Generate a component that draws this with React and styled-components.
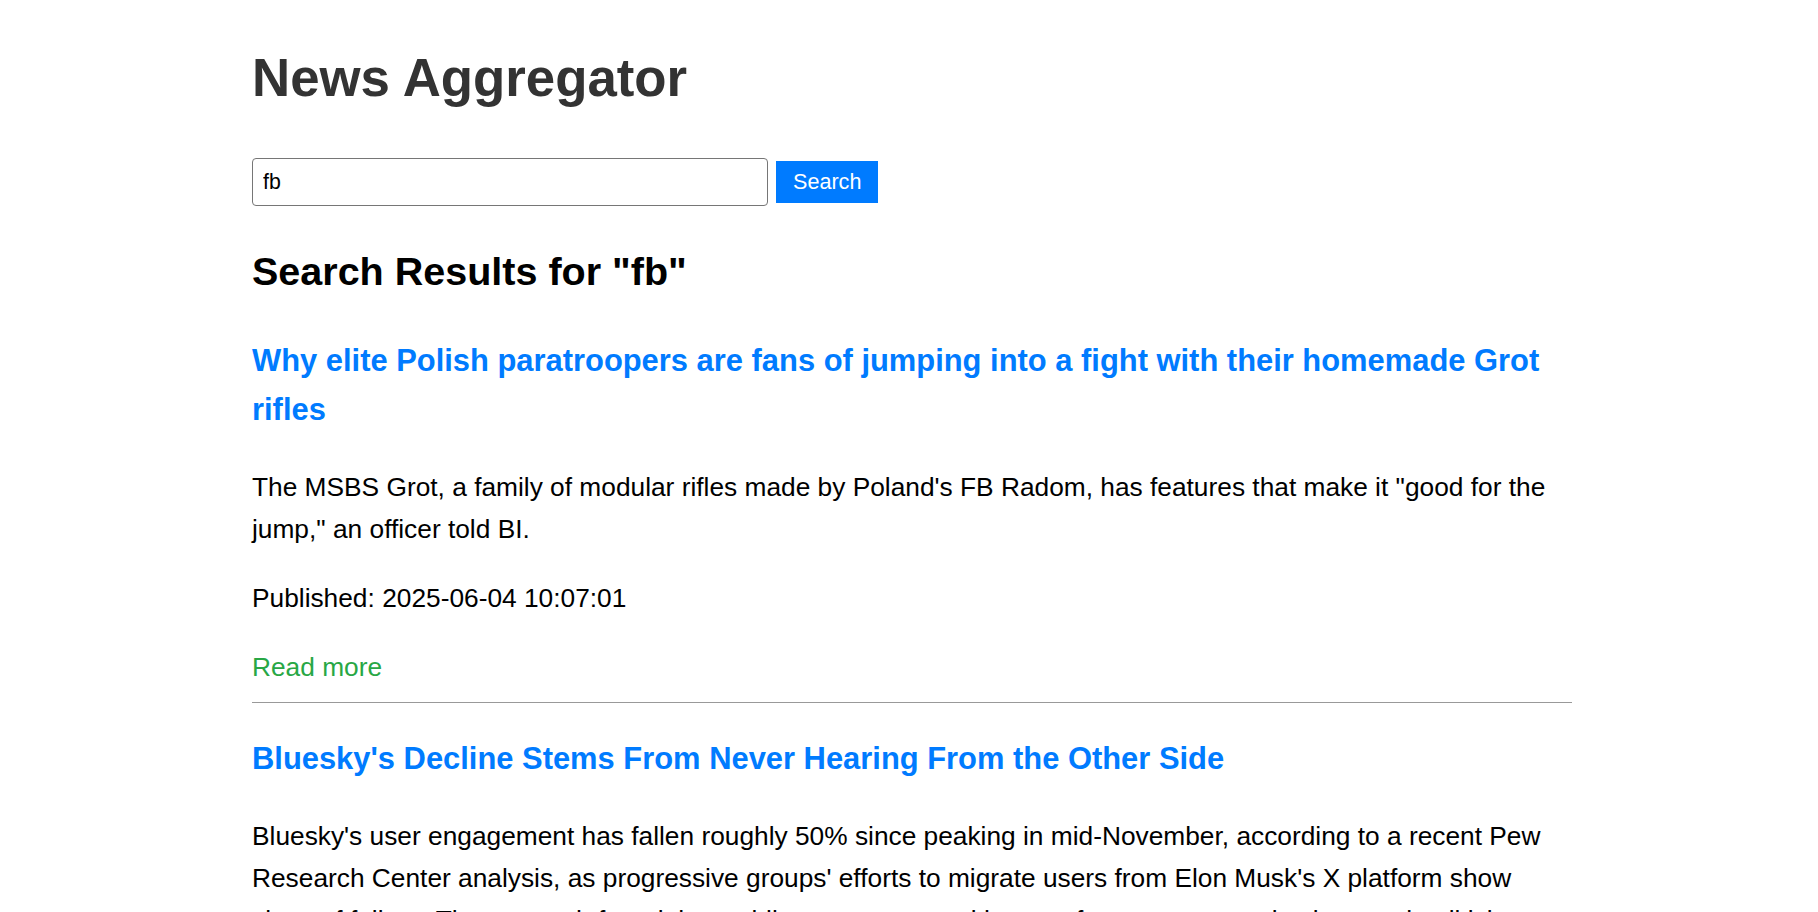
import React, { useState } from "react";
import styled, { createGlobalStyle } from "styled-components";

const GlobalStyle = createGlobalStyle`
  html, body {
    margin: 0;
    padding: 0;
    background: #fff;
  }
  body {
    font-family: "Liberation Sans", Arial, sans-serif;
    color: #000;
  }
`;

const Page = styled.div`
  display: flex;
  justify-content: center;
  padding: 48px 0 40px 6px;
`;

const Container = styled.main`
  width: 1320px;
  display: flex;
  flex-direction: column;
`;

const Heading = styled.h1`
  margin: 0;
  font-size: 52.8px;
  line-height: 60px;
  font-weight: 700;
  color: #333;
`;

const SearchForm = styled.form`
  display: flex;
  align-items: center;
  gap: 8px;
  margin-top: 50px;
`;

const SearchInput = styled.input`
  box-sizing: border-box;
  width: 516px;
  height: 48px;
  padding: 0 10px;
  border: 1px solid #767676;
  border-radius: 4px;
  font-family: "Liberation Sans", Arial, sans-serif;
  font-size: 21.33px;
  color: #000;
  outline: none;
`;

const SearchButton = styled.button`
  height: 42px;
  padding: 0 17px;
  border: none;
  border-radius: 0;
  background: #007bff;
  color: #fff;
  font-family: "Liberation Sans", Arial, sans-serif;
  font-size: 21.6px;
  cursor: pointer;
`;

const ResultsTitle = styled.h2`
  margin: 43px 0 0;
  font-size: 39.5px;
  line-height: 45px;
  font-weight: 700;
  color: #000;
`;

const ArticleList = styled.div`
  display: flex;
  flex-direction: column;
  margin-top: 42px;
`;

const Article = styled.article`
  display: flex;
  flex-direction: column;
  padding-bottom: 14px;
  border-bottom: 1px solid #999;
  margin-bottom: 31px;
`;

const ArticleTitle = styled.a`
  font-size: 30.9px;
  line-height: 49px;
  font-weight: 700;
  color: #007bff;
  text-decoration: none;
`;

const Text = styled.p`
  margin: ${(p) => (p.$first ? "32px" : "27px")} 0 0;
  font-size: 26.3px;
  line-height: 42px;
  color: #000;
`;

const ReadMore = styled.a`
  color: #28a745;
  text-decoration: none;
`;

const articles = [
  {
    id: 1,
    title:
      "Why elite Polish paratroopers are fans of jumping into a fight with their homemade Grot rifles",
    description:
      'The MSBS Grot, a family of modular rifles made by Poland\'s FB Radom, has features that make it "good for the jump," an officer told BI.',
    published: "2025-06-04 10:07:01",
  },
  {
    id: 2,
    title: "Bluesky's Decline Stems From Never Hearing From the Other Side",
    description:
      "Bluesky's user engagement has fallen roughly 50% since peaking in mid-November, according to a recent Pew Research Center analysis, as progressive groups' efforts to migrate users from Elon Musk's X platform show signs of failure. The research found that public engagement with posts from news organizations and politicians has declined steadily.",
    published: "2025-06-03 18:42:15",
  },
];

const App = () => {
  const [query, setQuery] = useState("fb");

  return (
    <>
      <GlobalStyle />
      <Page>
        <Container>
          <Heading>News Aggregator</Heading>
          <SearchForm onSubmit={(e) => e.preventDefault()}>
            <SearchInput
              value={query}
              onChange={(e) => setQuery(e.target.value)}
            />
            <SearchButton type="submit">Search</SearchButton>
          </SearchForm>
          <ResultsTitle>Search Results for "fb"</ResultsTitle>
          <ArticleList>
            {articles.map((a) => (
              <Article key={a.id}>
                <ArticleTitle href="#">{a.title}</ArticleTitle>
                <Text $first>{a.description}</Text>
                <Text>Published: {a.published}</Text>
                <Text>
                  <ReadMore href="#">Read more</ReadMore>
                </Text>
              </Article>
            ))}
          </ArticleList>
        </Container>
      </Page>
    </>
  );
};

export default App;
